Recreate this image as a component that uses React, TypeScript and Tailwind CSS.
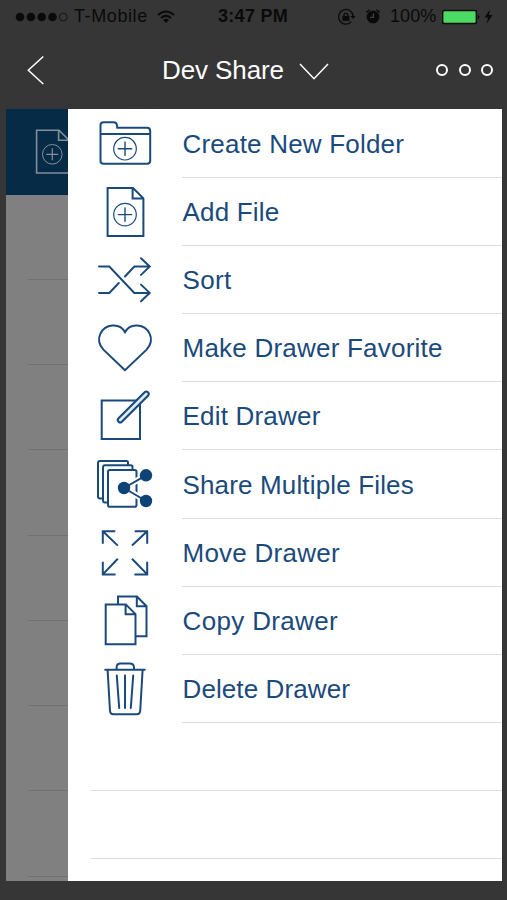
import React from 'react';

interface MenuItem {
  label: string;
  tracking: string;
  icon: React.ReactNode;
}

const FolderIcon = () => (
  <>
    <path d="M9.5 51.7V16.2Q9.5 13.2 12.5 13.2H22.5Q25.8 13.2 26 16.5L26.2 18.8H56Q59.2 18.8 59.2 22V51.7Q59.2 54.8 56 54.8H12.5Q9.5 54.8 9.5 51.7ZM9.5 25H59.2" />
    <circle cx="34" cy="39.7" r="11.3" strokeWidth="1.2" />
    <path d="M34 33V46.4M27.3 39.7H40.7" strokeWidth="1.4" />
  </>
);

const FileIcon = () => (
  <>
    <path d="M16.6 10H42L52.4 20.4V58H16.6ZM41.6 10V20.6H52.4" strokeLinejoin="miter" />
    <circle cx="34" cy="36.6" r="11.3" strokeWidth="1.2" />
    <path d="M34 29.9V43.3M27.3 36.6H40.7" strokeWidth="1.4" />
  </>
);

const SortIcon = () => (
  <path
    d="M8 20.6H18.3L43.3 46.9H58.7M50 38.6L58.7 46.9L50 55.2M8 46.9H18.3L27.8 37M34 30.5L43.3 20.6H58.7M50 12.3L58.7 20.6L50 28.9"
    strokeLinejoin="miter"
  />
);

const HeartIcon = () => (
  <path
    d="M34 56.2L12.4 35.6C7.8 31 6.8 24.6 9.4 19.6C14 10 28.6 8 34 18.2C39.4 8 54 10 58.6 19.6C61.2 24.6 60.2 31 55.6 35.6Z"
    strokeLinejoin="miter"
  />
);

const EditIcon = () => (
  <>
    <path d="M10.7 18.5H49V56.9H10.7Z" strokeLinejoin="miter" />
    <path d="M55.3 12L29.2 38" strokeWidth="6.8" />
    <path d="M55.3 12L29.2 38" stroke="#ddeefa" strokeWidth="2.6" />
  </>
);

const ShareIcon = () => (
  <>
    <path d="M37 15V12.5Q37 11 35.5 11H9Q7 11 7 13V46.5Q7 48.5 9 48.5H12" />
    <path d="M41.5 19V17Q41.5 15.3 39.8 15.3H14Q12 15.3 12 17.3V50.5Q12 52.5 14 52.5H17" />
    <rect x="17" y="20" width="28.5" height="36.7" rx="1.8" />
    <path d="M55 25.3L33 38L55 51" stroke="#fff" strokeWidth="6" />
    <path d="M55 25.3L33 38L55 51" />
    <g fill="#0d4377" stroke="none">
      <circle cx="33" cy="38" r="6.2" />
      <circle cx="55" cy="25.3" r="6.2" />
      <circle cx="55" cy="51" r="6.2" />
    </g>
  </>
);

const MoveIcon = () => (
  <path
    d="M24.3 12.2H11.8V24.8M11.8 12.2L26.8 26.6M43.7 12.2H56.2V24.8M56.2 12.2L41 26.6M24.6 55.4H11.8V42.8M11.8 55.4L26.8 39.8M43.4 55.4H56.2V42.8M56.2 55.4L41 39.8"
    strokeLinecap="butt"
    strokeLinejoin="miter"
  />
);

const CopyIcon = () => (
  <path
    d="M14.7 17.4H34.8L44.5 27.1V57.3H14.7ZM34.6 17.4V27.3H44.5M27 17V9.6H46L55.5 19.2V49.3H45M45.8 9.6V19.2H55.5"
    strokeLinejoin="miter"
  />
);

const TrashIcon = () => (
  <path d="M14.2 14.8H53.8M25.6 14.5V12Q26 8.4 29.4 8.4H38.8Q42.6 8.4 43 12V14.5M16.6 15L19 56Q19.3 59.3 22.4 59.3H45.8Q48.9 59.3 49.2 56L51.6 15M25.8 20.6L28.2 53M34 20.6V53M42.2 20.6L39.8 53" />
);

const menuItems: MenuItem[] = [
  { label: 'Create New Folder', tracking: 'tracking-[0.2px]', icon: <FolderIcon /> },
  { label: 'Add File', tracking: 'tracking-[0.2px]', icon: <FileIcon /> },
  { label: 'Sort', tracking: 'tracking-[0.35px]', icon: <SortIcon /> },
  { label: 'Make Drawer Favorite', tracking: 'tracking-[0.22px]', icon: <HeartIcon /> },
  { label: 'Edit Drawer', tracking: 'tracking-[0.2px]', icon: <EditIcon /> },
  { label: 'Share Multiple Files', tracking: 'tracking-[0.15px]', icon: <ShareIcon /> },
  { label: 'Move Drawer', tracking: 'tracking-[0.25px]', icon: <MoveIcon /> },
  { label: 'Copy Drawer', tracking: 'tracking-[0.35px]', icon: <CopyIcon /> },
  { label: 'Delete Drawer', tracking: 'tracking-[0.1px]', icon: <TrashIcon /> },
];

const StatusBar = () => (
  <div className="flex h-[33px] items-center pl-[15px] text-[#0a0a0a]">
    <svg className="h-[10px] w-[54px] shrink-0" viewBox="0 0 54 10" fill="currentColor">
      <circle cx="5" cy="5" r="4.3" />
      <circle cx="15.9" cy="5" r="4.3" />
      <circle cx="26.7" cy="5" r="4.3" />
      <circle cx="37.5" cy="5" r="4.3" />
      <circle cx="48.3" cy="5" r="3.9" fill="none" stroke="currentColor" strokeWidth="0.8" />
    </svg>
    <span className="ml-[5px] w-[75px] whitespace-nowrap text-[18px] tracking-[0.6px]">T-Mobile</span>
    <svg className="ml-[8px] h-[14px] w-[18px] shrink-0" viewBox="0 0 18 14" fill="none" stroke="currentColor" strokeWidth="2">
      <path d="M1 5Q9 -2 17 5" />
      <path d="M4 8Q9 3.7 14 8" />
      <path d="M6 10Q9 7.6 12 10L9 13Z" fill="currentColor" stroke="none" />
    </svg>
    <span className="ml-[43px] w-[73px] whitespace-nowrap text-[18px] font-bold tracking-[0.3px]">3:47 PM</span>
    <svg className="ml-[46px] h-[18px] w-[19px] shrink-0" viewBox="0 0 19 18" fill="none" stroke="currentColor" strokeWidth="1.3">
      <path d="M14.4 13.6A7.3 7.3 0 1 1 16.2 8.4" />
      <path d="M13.5 8H18.6L16 11Z" fill="currentColor" stroke="none" />
      <rect x="5.4" y="8" width="7" height="4.8" fill="currentColor" stroke="none" />
      <path d="M7 8V6.6Q8.9 3.8 10.8 6.6V8" />
    </svg>
    <svg className="ml-[9px] h-[17px] w-[16px] shrink-0" viewBox="0 0 16 17" fill="none" stroke="currentColor" strokeWidth="1.4">
      <circle cx="8" cy="9" r="6.4" fill="currentColor" stroke="none" />
      <path d="M1.4 4.4L4.6 1.8M14.6 4.4L11.4 1.8" />
      <path d="M8.4 5.4V9.3H5.2" stroke="#444" strokeWidth="1.2" />
    </svg>
    <span className="ml-[9px] w-[48px] whitespace-nowrap text-[18px] tracking-[0.1px]">100%</span>
    <svg className="ml-[4px] h-[16px] w-[38px] shrink-0" viewBox="0 0 38 16" fill="currentColor">
      <rect x="0" y="0.8" width="35" height="14.4" rx="1.8" />
      <rect x="1.4" y="2.2" width="32.2" height="11.6" rx="0.8" fill="#4cd964" />
      <path d="M35.6 5.3Q39 8 35.6 10.7Z" />
    </svg>
    <svg className="ml-[4px] h-[15px] w-[9px] shrink-0" viewBox="0 0 9 15" fill="currentColor">
      <path d="M6 0.5L0.5 8.6H4L2.8 14.5L8.6 6H5Z" />
    </svg>
  </div>
);

const NavBar = () => (
  <div className="flex h-[76px] items-center pb-[2px] pl-[27px] text-white">
    <svg className="h-[30px] w-[18px] shrink-0" viewBox="0 0 18 30" fill="none" stroke="currentColor" strokeWidth="1.5">
      <path d="M16.3 1.5L1.3 15.3L16.3 29" />
    </svg>
    <h1 className="ml-[117px] w-[124px] whitespace-nowrap text-[26px] tracking-[-0.1px]">Dev Share</h1>
    <svg className="ml-[13px] mt-[3px] h-[17px] w-[30px] shrink-0" viewBox="0 0 30 17" fill="none" stroke="currentColor" strokeWidth="1.5">
      <path d="M1 1L15 15.7L29 1" />
    </svg>
    <div className="ml-[107px] flex gap-[10.5px]">
      <span className="h-[12px] w-[12px] rounded-full border-[2.5px] border-white" />
      <span className="h-[12px] w-[12px] rounded-full border-[2.5px] border-white" />
      <span className="h-[12px] w-[12px] rounded-full border-[2.5px] border-white" />
    </div>
  </div>
);

// Dimmed list left visible beside the open menu
const Backdrop = () => (
  <div className="w-[62px] shrink-0 overflow-hidden bg-[#808080]">
    <div className="h-[85.5px] bg-[#062b47]">
      <svg className="h-[85px] w-[62px]" viewBox="0 0 62 85" fill="none" stroke="#828f9b" strokeWidth="1.6">
        <path d="M30.6 21.3H53L63 31.2V64H30.6ZM52.6 21.3V31.2H63" />
        <circle cx="46.3" cy="45.3" r="9.8" strokeWidth="1" />
        <path d="M46.3 39.3V51.3M40.3 45.3H52.3" strokeWidth="1.2" />
      </svg>
    </div>
    {[...Array(8)].map((_, index) => (
      <div key={index} className="ml-[22px] h-[85.25px] border-b border-[#717171]" />
    ))}
  </div>
);

const DrawerMenu = () => (
  <div className="min-w-0 flex-1 overflow-hidden bg-white pt-[0.4px]">
    {menuItems.map((item) => (
      <button key={item.label} className="flex h-[68.2px] w-full pl-[23px] text-left text-[#1a4a7c]">
        <svg
          className="h-[68px] w-[68px] shrink-0"
          viewBox="0 0 68 68"
          fill="none"
          stroke="#1a4a7c"
          strokeWidth="2"
          strokeLinecap="round"
          strokeLinejoin="round"
        >
          {item.icon}
        </svg>
        <span className="ml-[23px] flex h-full flex-1 items-center border-b border-[#dcdcdc] pl-[0.5px] pt-[1.5px]">
          <span className={`whitespace-nowrap text-[26px] leading-none ${item.tracking}`}>{item.label}</span>
        </span>
      </button>
    ))}
    <div className="ml-[23px] h-[68.2px] border-b border-[#dcdcdc]" />
    <div className="ml-[23px] h-[68.2px] border-b border-[#dcdcdc]" />
  </div>
);

const App: React.FC = () => {
  return (
    <div className="h-[900px] w-[507px] overflow-hidden bg-[#363636] font-['Liberation_Sans',Arial,sans-serif]">
      <StatusBar />
      <NavBar />
      <div className="ml-[6px] flex h-[772px] w-[496px] overflow-hidden">
        <Backdrop />
        <DrawerMenu />
      </div>
    </div>
  );
};

export default App;
